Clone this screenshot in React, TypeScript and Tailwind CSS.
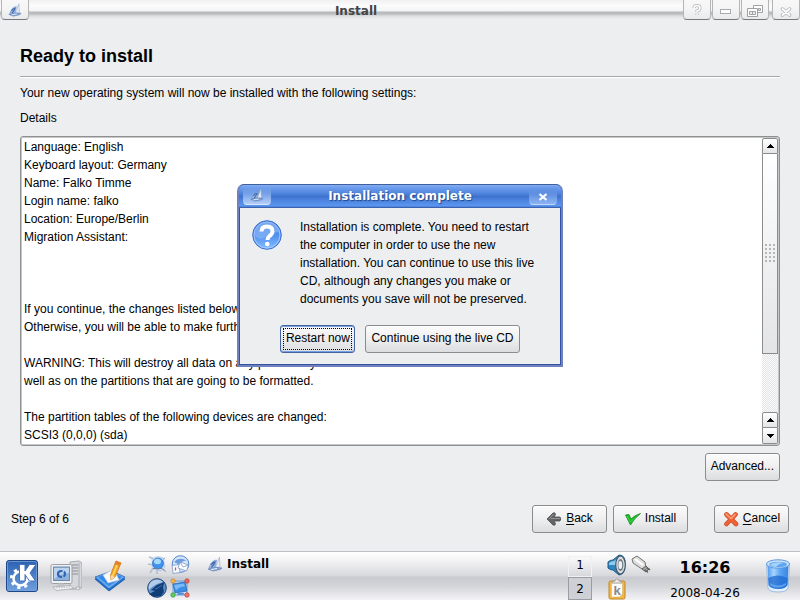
import type { ReactNode } from "react";

const summary = [
  "Language: English",
  "Keyboard layout: Germany",
  "Name: Falko Timme",
  "Login name: falko",
  "Location: Europe/Berlin",
  "Migration Assistant:",
  "",
  "",
  "",
  "If you continue, the changes listed below will be written to the disks.",
  "Otherwise, you will be able to make further changes manually.",
  "",
  "WARNING: This will destroy all data on any partitions you have removed as",
  "well as on the partitions that are going to be formatted.",
  "",
  "The partition tables of the following devices are changed:",
  "SCSI3 (0,0,0) (sda)",
];

const raised = "rounded-[3px] border border-[#8b8c8e] bg-linear-to-b from-[#fbfbfc] via-[#efeff0] to-[#dcdddf] text-black shadow-[inset_0_1px_0_#ffffff]";

function PushButton({ icon, children }: { icon?: ReactNode; children: ReactNode }) {
  return (
    <button className={`flex h-7 min-w-[75px] items-center justify-center gap-1 px-[5px] pb-[2px] whitespace-nowrap ${raised}`}>
      {icon}
      <span>{children}</span>
    </button>
  );
}

function FrameButton({ label, className = "", children }: { label: string; className?: string; children: ReactNode }) {
  return (
    <button
      aria-label={label}
      className={`flex h-5 w-7 items-end justify-center rounded-b-[4px] border border-t-0 border-[#b4b5b7] border-b-[#77787a] bg-linear-to-b from-[#f8f8f9] via-[#f4f4f5] to-[#e9eaeb] ${className}`}
    >
      {children}
    </button>
  );
}

function Arrow({ down = false }: { down?: boolean }) {
  return (
    <svg viewBox="0 0 8 4" className="h-1 w-2" shapeRendering="crispEdges">
      <path d={down ? "M0 0h8L4 4z" : "M0 4h8L4 0z"} />
    </svg>
  );
}

function ShipIcon({ className }: { className: string }) {
  return (
    <svg viewBox="0 0 16 16" className={className}>
      <path d="M12.500 1 8.500 11l4.500.5z" fill="#e4ebf5" stroke="#93a5c6" strokeWidth=".6" />
      <path d="M9.500 4Q5 4.500 3 9.500L2 12l6-.5z" fill="#a7c3ea" stroke="#6587c0" strokeWidth=".6" />
      <path d="M4 9q2-3 4-3Q7 9 4.500 11.500" fill="none" stroke="#3f6ab2" strokeWidth="1.300" />
      <path d="m1 13 8-1.500 6 .5-2 1.500-7 1.500z" fill="#89a8d8" stroke="#5273ad" strokeWidth=".6" />
      <path d="m4 13.500 6-1" stroke="#eaf1fb" />
    </svg>
  );
}

function BackIcon() {
  return (
    <svg viewBox="0 0 16 16" className="mt-[2px] size-4">
      <path d="M1 8 7 2Q9.500 1 9.500 3.500L8 6h6q1.500 2 0 4H8l1.500 2.500Q9.500 15 7 14z" fill="#626466" stroke="#4c4e50" strokeWidth=".8" />
      <path d="M3 8 8 3M5 7.500h9" stroke="#929496" strokeWidth="1" fill="none" />
    </svg>
  );
}

function CheckIcon() {
  return (
    <svg viewBox="0 0 16 16" className="mt-[2px] size-4">
      <path d="M.5 4 4 3.500l2 4.500Q10 4 15.500 2.500 9 7.500 5.500 14z" fill="#1fbd2c" stroke="#128b1d" strokeWidth=".8" />
      <path d="m2 5 3.500 6L10 6.500" stroke="#3bd43e" strokeWidth="1" fill="none" />
    </svg>
  );
}

function CrossIcon() {
  return (
    <svg viewBox="0 0 16 16" className="mt-[2px] size-4">
      <path d="m3.500 3.500 9.500 9.500M12.500 3.500 3.500 13" stroke="#cf4f2b" strokeWidth="4.600" strokeLinecap="round" />
      <path d="m3.500 3.500 9.500 9.500M12.500 3.500 3.500 13" stroke="#ee6238" strokeWidth="3.200" strokeLinecap="round" />
      <path d="m3 3 5 4.500 4-4" stroke="#ffa27a" strokeWidth="1.500" strokeLinecap="round" fill="none" />
    </svg>
  );
}

function QuestionIcon() {
  return (
    <svg viewBox="0 0 30 30" className="size-[30px] shrink-0">
      <defs>
        <linearGradient id="question" x1="0" y1="0" x2="0" y2="1">
          <stop offset="0" stopColor="#4a87e4" />
          <stop offset=".5" stopColor="#5090f0" />
          <stop offset="1" stopColor="#86beff" />
        </linearGradient>
      </defs>
      <circle cx="15" cy="15" r="14.300" fill="url(#question)" stroke="#3e6fd0" strokeWidth="1" />
      <circle cx="15" cy="15" r="13" fill="none" stroke="#a6c8fb" strokeWidth="1" />
      <path d="M3 16A12 12 0 0 1 27 12Q17 12 12 18q-5 2-9-2z" fill="#8db7f6" opacity=".65" />
      <path d="M9.500 11.500Q9.500 6.500 15 6.500t5.500 5Q20.500 14 17.500 16 15.500 17.500 15.500 20" fill="none" stroke="#fff" strokeWidth="4" />
      <circle cx="15.300" cy="24" r="2.300" fill="#fff" />
    </svg>
  );
}

function KMenuIcon() {
  return (
    <svg viewBox="0 0 32 32" className="size-8">
      <defs>
        <linearGradient id="kmenu" x1="0" y1="0" x2="0" y2="1">
          <stop offset="0" stopColor="#2b60b0" />
          <stop offset="1" stopColor="#6fa0de" />
        </linearGradient>
      </defs>
      <rect x=".5" y=".5" width="31" height="31" rx="2.500" fill="url(#kmenu)" stroke="#1c4688" />
      <rect x="1.500" y="1.500" width="29" height="29" rx="2" fill="none" stroke="#79a2d9" strokeWidth=".8" />
      <circle cx="14.500" cy="18.500" r="7" fill="none" stroke="#fff" strokeWidth="2.600" />
      <circle cx="14.500" cy="18.500" r="9.200" fill="none" stroke="#fff" strokeWidth="2.800" strokeDasharray="3.200 4.030" />
      <path d="M13.500 4.500H19v6.500l4.500-6.500H30L24 13l5.500 8h-6L19 14.500V21h-5.500z" fill="#fff" stroke="#3e73be" strokeWidth="1" />
    </svg>
  );
}

function ComputerIcon() {
  return (
    <svg viewBox="0 0 32 32" className="size-8">
      <path d="M20 2 29 1l3 2v24l-3 2h-9z" fill="#d6d8db" stroke="#999ca1" strokeWidth=".8" />
      <path d="M29 3v25" stroke="#a9acb1" />
      <path d="M22 5h6M22 8h6M22 11h6M22 14h6" stroke="#898d94" strokeWidth="1" />
      <rect x="1" y="4.500" width="21" height="19" rx="1.500" fill="#eef0f2" stroke="#9da0a5" />
      <rect x="3.500" y="7" width="16" height="13.500" fill="#8fb2dd" stroke="#7089ab" />
      <path d="M4 8h15v5Q10 13 4 19z" fill="#bed4ee" />
      <path d="M8 14q0-3 3.500-3T15 14t-3.500 3-3.500-3" fill="none" stroke="#2f65b3" strokeWidth="2.200" strokeDasharray="6 1.500" />
      <path d="M8 23.500h6l1 3H7z" fill="#c2c4c8" />
      <path d="m3 27 17-1.500 4 3L6 30.500z" fill="#f5f5f6" stroke="#a5a7aa" strokeWidth=".8" />
      <path d="m6 28 14-1" stroke="#b8babd" strokeDasharray="1.500 1" />
      <path d="M26 27q4-1 4 2-2 2-4 0z" fill="#ededee" stroke="#999" strokeWidth=".6" />
    </svg>
  );
}

function DesktopIcon() {
  return (
    <svg viewBox="0 0 32 32" className="size-8">
      <path d="m1 19 17-7 13 7-16 12z" fill="#1f6fd0" stroke="#1753a7" strokeWidth=".8" />
      <path d="m1 17 17-6 13 6-16 12z" fill="#69aaf0" stroke="#2868bd" strokeWidth=".8" />
      <path d="m4 17 14-5 10 5-13 9z" fill="#3288e5" />
      <path d="m9 15 11-6 5 11-11 3z" fill="#f7f9fd" stroke="#c0cbdc" strokeWidth=".7" />
      <path d="m22 1 5 2-6 14-4 3-.5-5z" fill="#f8a521" stroke="#c77a12" strokeWidth=".8" />
      <path d="m23.500 4-5 12" stroke="#ffdc72" strokeWidth="1.400" />
      <path d="m22 1 5 2-1.500 3-5-2z" fill="#e97e2b" />
      <path d="m16.500 15 4.500 2-4 3z" fill="#f4ddb0" />
    </svg>
  );
}

function GlobeIcon() {
  return (
    <svg viewBox="0 0 20 20" className="size-5">
      <path d="M2 2l5 2M18 3l-4 3M1 9l5 1M6 13l-3 5M10 14v5M14 12l5 5" stroke="#b6bfcb" strokeWidth="1.600" />
      <path d="M5 4Q10 0 16 3l2 9-4 4-8-2z" fill="#cfdff3" stroke="#a3bbdb" strokeWidth=".6" />
      <circle cx="11" cy="8.500" r="5.500" fill="#3f92ec" stroke="#2e73c8" strokeWidth=".7" />
      <ellipse cx="10.500" cy="6.500" rx="3.500" ry="2.700" fill="#a5dafc" />
      <path d="M6 13.500h9l2 2" stroke="#637ea4" fill="none" />
    </svg>
  );
}

function MailIcon() {
  return (
    <svg viewBox="0 0 20 20" className="size-5">
      <circle cx="10.500" cy="9" r="8.300" fill="#d5e5f9" stroke="#5585cb" strokeWidth="1" />
      <path d="M4 7Q9 1 17 6q-5-1-7 4z" fill="#6b9de0" />
      <path d="m2 10.500 7-1 1 8-7 1z" fill="#f8fafe" stroke="#6d8fc0" strokeWidth=".7" />
      <path d="m10 7 8.500 3-2 6-8.500-3z" fill="#fff" stroke="#6d8fc0" strokeWidth=".7" />
      <path d="m10 7 3 5 5.500-2" fill="none" stroke="#6d8fc0" strokeWidth=".7" />
      <path d="M5.500 12.500v3" stroke="#cf5948" strokeWidth="1.300" />
    </svg>
  );
}

function BirdIcon() {
  return (
    <svg viewBox="0 0 20 20" className="size-5">
      <circle cx="10" cy="10" r="9.300" fill="#5f8fc7" stroke="#1d4175" strokeWidth="1" />
      <path d="M1.500 9A8.500 8.500 0 0 1 16 4Q7 6 2 12z" fill="#b5cce8" />
      <path d="M17.500 4 16 9l1 5-3 4-7 1-5-3 6-3-4-1 6-5z" fill="#123e78" />
      <path d="m15 7-4 3-3 1" stroke="#4f80bb" strokeWidth=".8" fill="none" />
    </svg>
  );
}

function NetworkIcon() {
  return (
    <svg viewBox="0 0 20 20" className="size-5">
      <path d="M3 3h14v14H3z" fill="none" stroke="#669bd8" strokeWidth="1" />
      <path d="m3 6 12-2 2 9-12 2z" fill="#3b8ee6" stroke="#2a6bbd" strokeWidth=".8" />
      <path d="m4 7 10-1.500 1 3q-6 0-9 4z" fill="#79baf7" />
      <path d="m8 15 5-.5 2 2-8 .5z" fill="#4b8fd9" />
      <circle cx="3" cy="3" r="2.200" fill="#f3b657" stroke="#c5832e" strokeWidth=".7" />
      <circle cx="17" cy="3" r="2.200" fill="#e96859" stroke="#b93e30" strokeWidth=".7" />
      <circle cx="3" cy="17" r="2.200" fill="#5fcf60" stroke="#34953a" strokeWidth=".7" />
      <circle cx="17" cy="17" r="2.200" fill="#f0776a" stroke="#b93e30" strokeWidth=".7" />
    </svg>
  );
}

function SpeakerIcon() {
  return (
    <svg viewBox="0 0 20 22" className="h-[22px] w-5">
      <path d="M1 8q2-2 5-2l6-5q7 0 6 10t-6 10l-6-5q-3 0-5-2z" fill="#2f87be" stroke="#1d5a88" strokeWidth="1" />
      <path d="M2 9q2-2 5-2l4-3-2 7H2z" fill="#8fcbea" />
      <ellipse cx="13.500" cy="11" rx="4.800" ry="9" fill="#d9dee1" stroke="#41596b" strokeWidth="1.200" />
      <ellipse cx="13.500" cy="11" rx="2.900" ry="6" fill="#707b83" />
      <ellipse cx="13.300" cy="11" rx="1.900" ry="4" fill="#edf0f2" />
    </svg>
  );
}

function PlugIcon() {
  return (
    <svg viewBox="0 0 20 20" className="size-5">
      <path d="m1 4 5-3 8 6 1 5-4 2-9-6z" fill="#dededb" stroke="#73736f" strokeWidth="1" />
      <path d="m4 4 8 6" stroke="#fff" strokeWidth="2" />
      <path d="m11 14 4-3 3 3-3 3z" fill="#a9aaa6" stroke="#5f605e" strokeWidth="1" />
      <path d="m16 13 2.500 1.500M14 15l2.500 2" stroke="#5f605e" strokeWidth="1.500" strokeLinecap="round" />
    </svg>
  );
}

function ClipboardIcon() {
  return (
    <svg viewBox="0 0 20 22" className="h-[22px] w-5">
      <rect x="2" y="3" width="16" height="18" rx="1.500" fill="#f3b840" stroke="#c0872d" />
      <path d="M4.500 5h11v11l-3 3h-8z" fill="#fcfcfb" stroke="#d6b570" strokeWidth=".6" />
      <path d="M5 5q0-2 3-2 0-2 2-2t2 2q3 0 3 2z" fill="#e6e8ea" stroke="#909397" strokeWidth=".7" />
      <text x="6.500" y="17" className="fill-[#87898c] font-['Liberation_Sans',sans-serif] text-[13px] font-bold">k</text>
    </svg>
  );
}

function TrashIcon() {
  return (
    <svg viewBox="0 0 28 36" className="h-9 w-7">
      <defs>
        <linearGradient id="trash" x1="0" y1="0" x2="1" y2="0">
          <stop offset="0" stopColor="#4f9bef" />
          <stop offset=".3" stopColor="#a9d5fd" />
          <stop offset=".6" stopColor="#59a4f3" />
          <stop offset="1" stopColor="#3a84e0" />
        </linearGradient>
      </defs>
      <path d="M2.500 6 4 30q1 4 10 4t10-4l1.500-24z" fill="#e2effd" stroke="#8fb0da" strokeWidth=".8" />
      <path d="M3.500 7 4.500 27q2 4 9.500 4t9.500-4l1-20q-10 4-21 0z" fill="url(#trash)" />
      <path d="M4.200 20q9-5 19.600 0l-.5 7q-2 4-9.300 4t-9.300-4z" fill="#1e6ad0" opacity=".75" />
      <path d="M6 25q8 5 16 0v2q-8 5-16 0z" fill="#67adf6" opacity=".8" />
      <ellipse cx="14" cy="6" rx="11.500" ry="4.200" fill="#cfe5fc" stroke="#5c97de" strokeWidth="1" />
      <ellipse cx="14" cy="6.500" rx="9" ry="2.700" fill="#5ba5f2" />
      <path d="M6 6q8-3 13-1-5 1-7 4-5-1-6-3z" fill="#a6d2fb" />
    </svg>
  );
}

function WindowFrame() {
  return (
    <header className="flex h-5 items-start bg-[linear-gradient(to_bottom,#f0f0f1_0px,#fcfcfc_6px,#f3f3f4_11px,#b7b8ba_12px,#bdbec0_14px,#dddee0_16px,#eceeef_19px)] pl-px">
      <FrameButton label="Window menu">
        <ShipIcon className="mb-[2px] size-[14px]" />
      </FrameButton>
      <h2 className="flex-1 text-center font-['DejaVu_Sans',sans-serif] text-[12px] leading-[22px] font-bold text-[#444446]">Install</h2>
      <FrameButton label="Help">
        <svg viewBox="0 0 10 12" className="mb-[3px] h-3 w-[10px]">
          <path d="M2 4q0-2.500 3-2.500T8 4 5 7v1M5 9.500v1.500" fill="none" stroke="#b2b3b5" strokeWidth="3" />
          <path d="M2 4q0-2.500 3-2.500T8 4 5 7v1M5 9.500v1.500" fill="none" stroke="#fff" strokeWidth="1.500" />
        </svg>
      </FrameButton>
      <FrameButton label="Minimize" className="ml-px">
        <svg viewBox="0 0 12 5" className="mb-[5px] h-[5px] w-3">
          <rect x=".5" y=".5" width="10" height="4" fill="#fff" stroke="#a9aaac" />
        </svg>
      </FrameButton>
      <FrameButton label="Restore" className="ml-px">
        <svg viewBox="0 0 18 12" className="mb-[2px] h-3 w-[18px]">
          <path d="M7.500 .5h9v7h-9z" fill="#fff" stroke="#a0a1a3" />
          <path d="M12.500 3.500h2v2h-2z" fill="#eee" stroke="#a0a1a3" />
          <path d="M1.500 3.500h10v8h-10z" fill="#fff" stroke="#a0a1a3" />
          <path d="M3.500 6.500h6v3h-6zM6.500 6.500v3" fill="#eee" stroke="#a0a1a3" />
        </svg>
      </FrameButton>
      <FrameButton label="Close" className="ml-[3px]">
        <svg viewBox="0 0 12 10" className="mb-[2px] h-[10px] w-3">
          <path d="m2.500 2 7 6M9.500 2l-7 6" stroke="#aeafb1" strokeWidth="3.500" strokeLinecap="round" />
          <path d="m2.500 2 7 6M9.500 2l-7 6" stroke="#fff" strokeWidth="2" strokeLinecap="round" />
        </svg>
      </FrameButton>
    </header>
  );
}

function ScrollBar() {
  const arrow = "flex h-4 shrink-0 items-center justify-center border border-[#8b8c8e] bg-linear-to-b from-white to-[#e4e5e6]";
  return (
    <div className="flex w-4 flex-col bg-[repeating-conic-gradient(#e4e5e6_0_25%,#fafafa_0_50%)] bg-size-[2px_2px]">
      <button aria-label="Scroll up" className={`${arrow} rounded-t-[2px]`}>
        <Arrow />
      </button>
      <div className="flex h-[200px] items-center justify-center border border-t-0 border-[#8b8c8e] bg-linear-to-b from-white to-[#e3e4e6]">
        <div className="h-[19px] w-[11px] bg-[radial-gradient(circle_at_1px_1px,#b4b6b8_1px,transparent_1px)] bg-size-[4px_4px]" />
      </div>
      <div className="flex-1" />
      <button aria-label="Scroll up one line" className={`${arrow} rounded-t-[2px]`}>
        <Arrow />
      </button>
      <button aria-label="Scroll down" className={`${arrow} rounded-b-[2px] border-t-0`}>
        <Arrow down />
      </button>
    </div>
  );
}

function CompleteDialog() {
  return (
    <section
      role="dialog"
      aria-labelledby="dialog-title"
      className="absolute top-[184px] left-1/2 w-[326px] -translate-x-1/2 rounded-t-[7px] border-2 border-t border-[#7082bd] border-t-[#405f9e] bg-[#3553a5]"
    >
      <header className="flex h-[23px] items-start rounded-t-[5px] bg-[linear-gradient(to_bottom,#86aef0_0px,#71a0ee_2px,#5287df_8px,#3c6fcc_12px,#467bd8_13px,#5b97f0_21px,#2f529d_23px)] px-1">
        <button aria-label="Dialog menu" className="flex h-5 w-7 items-end justify-center rounded-b-[4px] border border-t-0 border-transparent border-b-[#d6e5fb] bg-linear-to-b from-transparent via-[#7aa4e8] to-[#b4cff7]">
          <ShipIcon className="mb-[2px] size-[14px]" />
        </button>
        <h2 id="dialog-title" className="flex-1 text-center font-['DejaVu_Sans',sans-serif] text-[12px] leading-[22px] font-bold text-white [text-shadow:1px_1px_1px_#234784]">
          Installation complete
        </h2>
        <button aria-label="Close dialog" className="flex h-5 w-7 items-end justify-center rounded-b-[4px] border border-t-0 border-transparent border-b-[#bed5f7] bg-linear-to-b from-transparent via-[#6291e1] to-[#8bb3f2]">
          <svg viewBox="0 0 10 8" className="mb-[3px] h-2 w-[10px]">
            <path d="m1.500 1 7 6M8.500 1l-7 6" stroke="#fff" strokeWidth="2.200" />
          </svg>
        </button>
      </header>
      <div className="mx-px mb-px bg-[#eceef0] px-3 pt-[10px] pb-[11px]">
        <div className="flex gap-[18px]">
          <div className="pt-[2px]">
            <QuestionIcon />
          </div>
          <p className="flex-1">
            Installation is complete. You need to restart the computer in order to use the new installation. You can continue to use this live CD, although any changes you make or documents you save will not be preserved.
          </p>
        </div>
        <div className="mt-[17px] flex justify-center gap-[10px]">
          <button className="h-7 min-w-[75px] rounded-[3px] border border-[#45659f] bg-linear-to-b from-[#fafafb] to-[#dddee0] p-[2px] whitespace-nowrap shadow-[inset_0_1px_0_#77a0e4,inset_0_-1px_0_#77a0e4]">
            <span className="flex h-full items-center justify-center border border-dotted border-black pb-[2px]">Restart now</span>
          </button>
          <PushButton>Continue using the live CD</PushButton>
        </div>
      </div>
    </section>
  );
}

function Panel() {
  return (
    <footer className="flex h-[49px] items-start border-t border-[#bfc0c3] bg-[linear-gradient(to_bottom,#ffffff_0px,#f4f4f6_8px,#d7d8dc_24px,#c9cad0_25px,#d4d5d9_34px,#f3f3f5_48px)] pr-2 pl-[6px] font-['DejaVu_Sans',sans-serif]">
      <nav aria-label="Applications" className="flex gap-3 pt-2">
        <button aria-label="K Menu"><KMenuIcon /></button>
        <button aria-label="System"><ComputerIcon /></button>
        <button aria-label="Show desktop"><DesktopIcon /></button>
      </nav>
      <nav aria-label="Quick launch" className="ml-[21px] grid grid-cols-2 gap-[3px] pt-[3px]">
        <button aria-label="Browser"><GlobeIcon /></button>
        <button aria-label="Mail"><MailIcon /></button>
        <button aria-label="Music"><BirdIcon /></button>
        <button aria-label="Network"><NetworkIcon /></button>
      </nav>
      <button className="ml-[17px] flex items-center gap-1 pt-[3px] text-[12px] leading-[18px] font-bold text-black">
        <ShipIcon className="size-4" />
        Install
      </button>
      <div className="flex-1" />
      <div className="grid pt-1 text-[12px]">
        <button className="h-[21px] w-6 border border-[#f1f1f4] pb-1 text-center leading-[16px]">1</button>
        <button className="h-[23px] w-6 border border-[#9b9ca4] bg-[#cfd0d6] text-center leading-[20px]">2</button>
      </div>
      <div className="ml-[15px] grid grid-cols-2 gap-x-1 gap-y-[2px] pt-[2px]">
        <button aria-label="Volume"><SpeakerIcon /></button>
        <button aria-label="Power"><PlugIcon /></button>
        <button aria-label="Clipboard"><ClipboardIcon /></button>
      </div>
      <div className="ml-[18px] w-[72px] text-center whitespace-nowrap">
        <div className="pt-[6px] text-[16px] leading-[20px] font-bold">16:26</div>
        <div className="pt-[7px] text-[12px] leading-4">2008-04-26</div>
      </div>
      <button aria-label="Trash" className="ml-[23px] pt-[6px]"><TrashIcon /></button>
    </footer>
  );
}

export default function App() {
  return (
    <div className="relative flex min-h-screen flex-col bg-[#eceef0] font-['Liberation_Sans',sans-serif] text-[12px] leading-[18px] text-black">
      <WindowFrame />
      <main className="flex flex-1 flex-col px-5 pt-6">
        <h1 className="text-[18px] leading-6 font-bold">Ready to install</h1>
        <hr className="mt-2 h-[2px] border-t border-b border-t-[#a5a7a9] border-b-white" />
        <p className="mt-[6px]">Your new operating system will now be installed with the following settings:</p>
        <label htmlFor="details" className="mt-[7px]">Details</label>
        <div className="mt-[9px] flex rounded-[3px] border border-[#8f9092] bg-white p-px shadow-[inset_0_0_0_1px_#c6c7c9]">
          <textarea
            id="details"
            readOnly
            rows={summary.length}
            value={summary.join("\n")}
            className="block flex-1 resize-none overflow-hidden bg-white px-[2px] outline-none"
          />
          <ScrollBar />
        </div>
        <div className="mt-[7px] flex justify-end">
          <PushButton>Advanced...</PushButton>
        </div>
      </main>
      <div className="flex items-center pt-6 pr-[11px] pb-[18px] pl-[11px]">
        <span className="flex-1">Step 6 of 6</span>
        <PushButton icon={<BackIcon />}>
          <span className="underline underline-offset-2">B</span>ack
        </PushButton>
        <div className="ml-[6px]">
          <PushButton icon={<CheckIcon />}>Install</PushButton>
        </div>
        <div className="ml-[26px]">
          <PushButton icon={<CrossIcon />}>
            <span className="underline underline-offset-2">C</span>ancel
          </PushButton>
        </div>
      </div>
      <Panel />
      <CompleteDialog />
    </div>
  );
}
